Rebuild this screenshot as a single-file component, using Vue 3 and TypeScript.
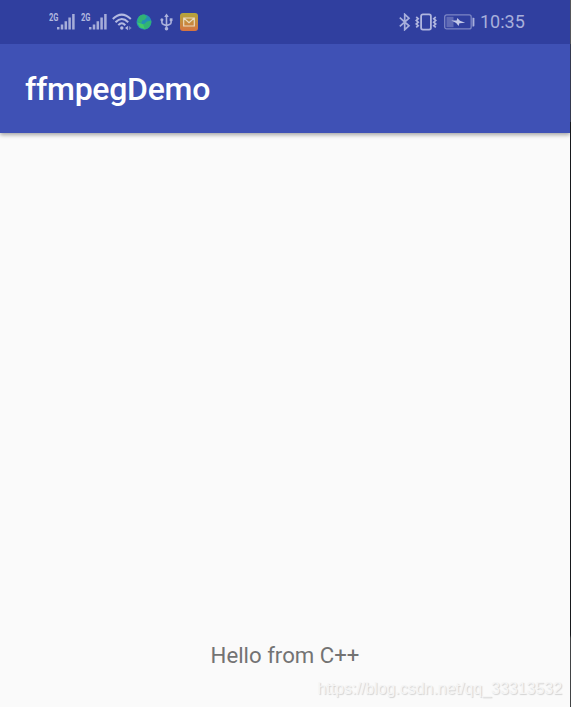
<script setup lang="ts">
const title: string = 'ffmpegDemo'
const message: string = 'Hello from C++'
const watermark: string = 'https://blog.csdn.net/qq_33313532'
const time: string = '10:35'
const sims: string[] = ['2G', '2G']
</script>

<template>
  <div class="page">
    <div class="screen">
      <header class="status">
        <div class="left">
          <div v-for="(sim, i) in sims" :key="i" class="sim">
            <span class="net">{{ sim }}</span>
            <svg class="bars" width="18" height="16" viewBox="0 0 18 16">
              <path d="M1.2 13V15.6M5 10.6V15.6M8.8 7.2V15.6M12.6 3.4V15.6M16.4 0V15.6" stroke="#a6add9" stroke-width="2.5" />
            </svg>
          </div>
          <svg class="wifi" width="20" height="18" viewBox="0 0 20 18" fill="none" stroke="#b4bae1">
            <path d="M.8 6Q9.7-2.8 18.8 6M3.5 9.2Q9.7 2.8 16.2 9.2M6.3 12.2Q9.7 8.4 13.3 12.2" stroke-width="2" />
            <circle cx="9.8" cy="15" r="1.7" fill="#b4bae1" stroke="none" />
            <path d="M15.9 12.8 13 15l2.9 2.2Z" fill="#b4bae1" stroke="none" />
            <path d="m16.8 12.8 2.9 2.2-2.9 2.2Z" fill="#7680c0" stroke="none" />
          </svg>
          <svg class="globe" width="16" height="16" viewBox="0 0 16 16">
            <circle cx="8" cy="8" r="7.5" fill="#238fb4" />
            <path d="M3 2.5C5 .8 7 .4 9 .7l2 2.2-2.5 3-2.3.6-.5 2-2.1.5L1.2 7ZM15.3 6.5 11 7.5 8.2 10l-2.7.3 1.4 2.2 1.1 2.9c4 .2 7.5-3.6 7.3-8.9Z" fill="#31b375" />
            <path d="m.9 8.3 3.4.9 3 1.2 1.3 4.5L4 13.5Z" fill="#42c969" />
          </svg>
          <svg class="usb" width="13" height="18" viewBox="0 0 13 18" fill="none" stroke="#adb3dc" stroke-width="1.6">
            <path d="M6.5 2.5V15M1.9 6.5v3q0 1.6 1.6 1.9l3 1.2 3-1.2q1.6-.3 1.6-1.9v-3" />
            <path d="M6.5.5 4.2 4h4.6Z" fill="#adb3dc" stroke="none" />
            <circle cx="6.5" cy="15.7" r="1.8" fill="#adb3dc" stroke="none" />
            <circle cx="1.9" cy="6.7" r="1.5" fill="#adb3dc" stroke="none" />
            <path d="M9.7 5.3h2.8v2.8H9.7Z" fill="#adb3dc" stroke="none" />
          </svg>
          <svg class="mail" width="18" height="18" viewBox="0 0 18 18">
            <defs>
              <linearGradient id="mailFill" x1="0" y1="0" x2="0" y2="1">
                <stop offset="0" stop-color="#b5a63b" />
                <stop offset="1" stop-color="#d67340" />
              </linearGradient>
            </defs>
            <rect width="18" height="18" rx="3" fill="url(#mailFill)" />
            <path d="M3.7 5h10.6v8H3.7Zm.3.3L9 9.6l5-4.3" fill="none" stroke="#ead9bd" stroke-width="1.2" />
          </svg>
        </div>
        <div class="right">
          <svg class="bt" width="12" height="18" viewBox="0 0 12 18">
            <path d="m.8 4.6 9.2 8.2-4.3 3.9V1.3L10 5.2.8 13.4" fill="none" stroke="#a8afdb" stroke-width="1.7" />
          </svg>
          <svg class="vibrate" width="22" height="18" viewBox="0 0 22 18" fill="none" stroke="#b0b6df">
            <rect x="6.1" y="1.4" width="9.8" height="15.2" rx="1.8" stroke-width="1.8" />
            <path d="m1.2 4 2 1.7-2 1.8 2 1.7-2 1.8 2 1.7-2 1.7M20.8 4l-2 1.7 2 1.8-2 1.7 2 1.8-2 1.7 2 1.7" stroke-width="1.7" />
          </svg>
          <svg class="battery" width="31" height="16" viewBox="0 0 31 16">
            <rect x=".7" y=".9" width="26.5" height="14" rx="2" fill="none" stroke="#7c86c5" stroke-width="1.3" />
            <path d="M2.5 2.8h7v10.4h-7Z" fill="#606bb6" />
            <path d="m7.3 6.5 5.4.1.6-2.5 2.7 2.6 5.2 2-5.8.6-.8 2.6-2.4-3Z" fill="#c3c8e8" />
            <path d="M28.5 3.7h1q.9 0 .9.9v7q0 .9-.9.9h-1Z" fill="#a8afdb" />
          </svg>
          <span class="time">{{ time }}</span>
        </div>
      </header>
      <div class="toolbar"><h1>{{ title }}</h1></div>
      <main>
        <p class="message">{{ message }}</p>
        <p class="watermark">{{ watermark }}</p>
      </main>
    </div>
    <div class="edge"></div>
  </div>
</template>

<style>
body { margin: 0; overflow: hidden; }
</style>

<style scoped>
.page { display: flex; width: 571px; height: 707px; font-family: Roboto, "Liberation Sans", sans-serif; }
.screen { display: flex; flex-direction: column; width: 570px; background: #fafafa; }
.edge { width: 1px; background: linear-gradient(#55565a 0 44px, #34394f 44px 122px, #17191d 122px 635px, #424446 638px); }
.status { display: flex; flex: none; justify-content: space-between; height: 44px; box-sizing: border-box; padding: 0 46px 0 48px; background: #303f9f; }
.left, .right { display: flex; align-items: center; height: 44px; }
.sim { display: flex; width: 32px; height: 18px; }
.net { width: 8.5px; margin-left: .5px; font-size: 10.5px; line-height: 9px; font-weight: 700; color: #b2b8df; transform: scaleX(.72); transform-origin: left; }
.bars { flex: none; margin-top: 1px; }
.globe { margin-left: 4px; }
.usb { margin-left: 8px; }
.mail { margin-left: 7px; }
.vibrate { margin-left: 4px; }
.battery { margin-left: 7px; }
.time { width: 44px; margin-left: 5px; font-size: 18px; line-height: 22px; color: #a8afdb; white-space: nowrap; }
.toolbar { position: relative; display: flex; flex: none; align-items: center; height: 89px; box-sizing: border-box; padding: 1px 25px 0; background: #3f51b5; box-shadow: 0 2px 4px rgba(0, 0, 0, .34); clip-path: inset(0 0 -10px 0); }
h1 { margin: 0; font-size: 32px; line-height: 40px; font-weight: 500; letter-spacing: -.27px; color: #fff; }
main { display: flex; flex: 1; flex-direction: column; justify-content: flex-end; }
.message { margin: 0 0 10px; font-size: 22.2px; line-height: 28px; text-align: center; color: #737373; }
.watermark { margin: 0 8px 8px; font-family: "Liberation Sans", Arial, sans-serif; font-size: 16px; line-height: 20px; letter-spacing: -.03px; text-align: right; color: #f5f5f5; text-shadow: 1px 1px 1px #d2d2d2; }
</style>
